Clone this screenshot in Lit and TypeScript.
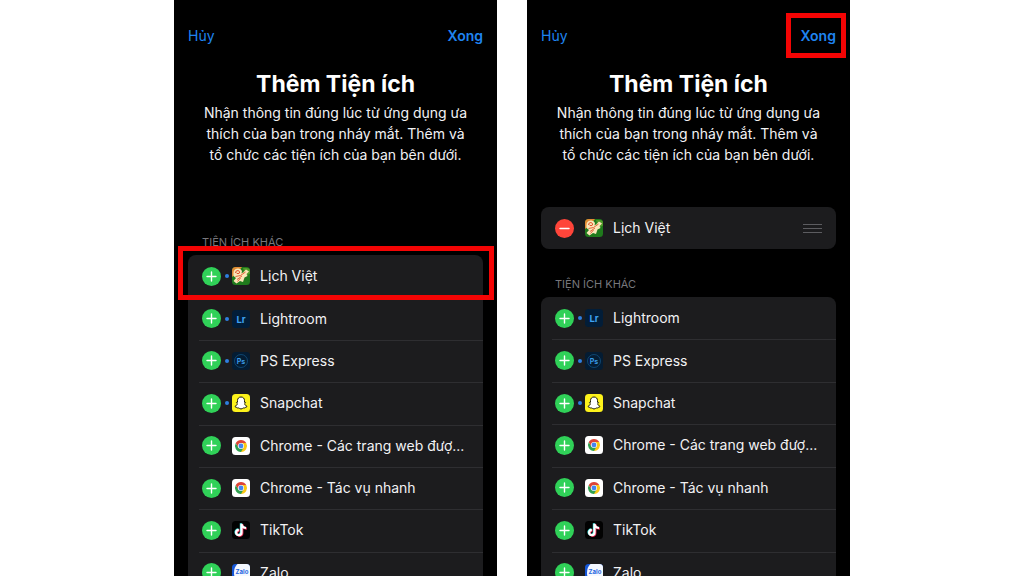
import { LitElement, html, css, svg, nothing } from "lit";
import { customElement, property } from "lit/decorators.js";
import { classMap } from "lit/directives/class-map.js";

interface Widget {
  name: string;
  icon: string;
  fresh?: boolean;
  marked?: boolean;
}

const CALENDAR: Widget = { name: "Lịch Việt", icon: "calendar", fresh: true };

const OTHERS: Widget[] = [
  { name: "Lightroom", icon: "lightroom", fresh: true },
  { name: "PS Express", icon: "photoshop", fresh: true },
  { name: "Snapchat", icon: "snapchat", fresh: true },
  { name: "Chrome - Các trang web đượ...", icon: "chrome" },
  { name: "Chrome - Tác vụ nhanh", icon: "chrome" },
  { name: "TikTok", icon: "tiktok" },
  { name: "Zalo", icon: "zalo" },
];

const ICONS: Record<string, unknown> = {
  calendar: svg`
    <rect width="36" height="36" rx="7" fill="#1f7a1c"/>
    <path d="M0 20V7Q0 0 7 0H20L10 12Z" fill="#e08a34"/>
    <path d="M22 2H29Q36 2 36 8V13L27 18Z" fill="#4f9a28"/>
    <path d="M3 12Q3 4 11 3Q18 2 20 8L19 13L28 5L34 9L29 14L31 18L25 21L22 30L16 28L9 33L3 28L8 22L3 18Z" fill="#fae6b8"/>
    <path d="M7 12Q7 7 12 7Q16 8 15 12Q12 15 9 12" fill="none" stroke="#e0502c" stroke-width="2"/>
    <path d="M7 19L17 17L27 10M10 25L20 18M11 29L17 22" fill="none" stroke="#e0562e" stroke-width="1.8"/>
    <path d="M21 12L25 7" stroke="#3c8a22" stroke-width="1.6"/>`,
  lightroom: svg`
    <rect width="36" height="36" rx="7" fill="#021d38"/>
    <text x="18" y="25" class="glyph" font-size="19" fill="#3fa2f2">Lr</text>`,
  photoshop: svg`
    <rect width="36" height="36" rx="7" fill="#041c33"/>
    <circle cx="18" cy="18" r="13" fill="none" stroke="#12507f" stroke-width="1.6"/>
    <text x="18" y="23" class="glyph" font-size="14" fill="#3a9be6">Ps</text>`,
  snapchat: svg`
    <rect width="36" height="36" rx="7" fill="#fdf21b"/>
    <path d="M18 6C22.5 6 25 9.2 25 13V16.6C26.6 16.2 27.8 17 26.8 18.2L25.2 19.4C26 22.4 28 23.8 30 24.4C30.4 25.8 28.4 26.2 26.8 26.6C26.4 28.4 25 27.8 23.4 27.8C21.6 27.8 20.6 30 18 30C15.4 30 14.4 27.8 12.6 27.8C11 27.8 9.6 28.4 9.2 26.6C7.6 26.2 5.6 25.8 6 24.4C8 23.8 10 22.4 10.8 19.4L9.2 18.2C8.2 17 9.4 16.2 11 16.6V13C11 9.2 13.5 6 18 6Z" fill="#fff" stroke="#1c1c0a" stroke-width="2" stroke-linejoin="round"/>`,
  chrome: svg`
    <rect width="36" height="36" rx="7" fill="#fff"/>
    <path d="M18 18L7.6 12A12 12 0 0 1 28.4 12Z" fill="#dd4436"/>
    <path d="M18 18L28.4 12A12 12 0 0 1 18 30Z" fill="#fbc814"/>
    <path d="M18 12H28.4L18 30L23.2 21Z" fill="#fbc814"/>
    <path d="M18 30L23.2 21L12.8 21L7.6 12A12 12 0 0 0 18 30Z" fill="#2fa04f"/>
    <path d="M7.6 12L12.8 21L18 12Z" fill="#dd4436"/>
    <circle cx="18" cy="18" r="6" fill="#fff"/>
    <circle cx="18" cy="18" r="4.8" fill="#4385f0"/>`,
  tiktok: svg`
    <rect width="36" height="36" rx="7" fill="#020202"/>
    <g fill="none" stroke-width="4.4">
      <path d="M19 5.5V23A5.4 5.4 0 1 1 13.6 17.6M19 5.5Q19.6 13 28 14" transform="translate(-1.2 -0.8)" stroke="#35e6e0"/>
      <path d="M19 5.5V23A5.4 5.4 0 1 1 13.6 17.6M19 5.5Q19.6 13 28 14" transform="translate(1.6 1.2)" stroke="#f0305a"/>
      <path d="M19 5.5V23A5.4 5.4 0 1 1 13.6 17.6M19 5.5Q19.6 13 28 14" stroke="#fff"/>
    </g>`,
  zalo: svg`
    <rect width="36" height="36" rx="7" fill="#1557d8"/>
    <path d="M11 0H29Q36 0 36 7V29Q36 36 29 36H14Q4 30 4 18Q4 6 11 0Z" fill="#f4f8ff"/>
    <text x="20" y="20" class="glyph" font-size="12" fill="#1f66e0">Zalo</text>`,
};

@customElement("widget-row")
class WidgetRow extends LitElement {
  @property({ attribute: false }) widget!: Widget;
  @property({ type: Boolean }) added = false;

  static styles = css`
    :host {
      display: flex;
      align-items: center;
      height: 100%;
      padding: 0 14px;
      box-sizing: border-box;
    }
    .toggle {
      flex: none;
      width: 19px;
      height: 19px;
      padding: 0;
      border: 0;
      border-radius: 50%;
      background: #30d158;
      cursor: pointer;
    }
    .toggle.remove {
      background: #ff453a;
    }
    .sign,
    .icon,
    .grip {
      display: block;
    }
    .slot {
      flex: none;
      display: grid;
      place-items: center;
      width: 11px;
    }
    .dot {
      width: 4px;
      height: 4px;
      border-radius: 50%;
      background: #2f7fe0;
    }
    .icon {
      flex: none;
      width: 18px;
      height: 18px;
    }
    .glyph {
      font-family: Inter, sans-serif;
      font-weight: 700;
      text-anchor: middle;
    }
    .name {
      flex: 1;
      min-width: 0;
      margin-left: 10px;
      overflow: hidden;
      white-space: nowrap;
      text-overflow: ellipsis;
      line-height: 24px;
    }
    .handle {
      flex: none;
      padding: 0;
      border: 0;
      background: none;
      cursor: grab;
    }
  `;

  render() {
    const { name, icon, fresh } = this.widget;
    return html`
      <button
        class=${classMap({ toggle: true, remove: this.added })}
        aria-label=${(this.added ? "Xóa " : "Thêm ") + name}
      >
        <svg class="sign" width="19" height="19" viewBox="0 0 19 19" aria-hidden="true">
          <path d=${this.added ? "M5 9.5H14" : "M5 9.5H14M9.5 5V14"} stroke="#fff" stroke-width="1.4" stroke-linecap="round" />
        </svg>
      </button>
      <span class="slot">${fresh && !this.added ? html`<span class="dot"></span>` : nothing}</span>
      <svg class="icon" viewBox="0 0 36 36" aria-hidden="true">${ICONS[icon]}</svg>
      <span class="name">${name}</span>
      ${this.added
        ? html`<button class="handle" aria-label="Sắp xếp ${name}">
            <svg class="grip" width="19" height="12" viewBox="0 0 19 12" aria-hidden="true">
              <path d="M0 2.5H19M0 6.5H19M0 10.5H19" stroke="#5c5c60" />
            </svg>
          </button>`
        : nothing}
    `;
  }
}

@customElement("widget-sheet")
class WidgetSheet extends LitElement {
  @property({ attribute: false }) added: Widget[] = [];
  @property({ attribute: false }) others: Widget[] = [];
  @property({ type: Boolean, attribute: "mark-done" }) markDone = false;

  static styles = css`
    :host {
      display: flex;
      flex-direction: column;
      min-width: 0;
      padding: 0 14px;
      overflow: hidden;
      box-sizing: border-box;
      background: #000;
      color: #f2f2f4;
      font: 14px/20px Inter, "Noto Sans", sans-serif;
    }
    .bar {
      display: flex;
      align-items: center;
      justify-content: space-between;
      height: 72px;
    }
    .action {
      position: relative;
      padding: 0;
      border: 0;
      background: none;
      color: #1f84f0;
      font: inherit;
      cursor: pointer;
    }
    .done {
      font-weight: 600;
    }
    .intro {
      padding-bottom: 42px;
      text-align: center;
    }
    .title {
      margin: 0;
      color: #fff;
      font-size: 23px;
      font-weight: 700;
      line-height: 24px;
    }
    .lead {
      margin: 6px 0 0;
      line-height: 21px;
    }
    .line {
      display: block;
      white-space: nowrap;
    }
    .list {
      display: grid;
      grid-template-columns: minmax(0, 1fr);
      margin: 0;
      padding: 0;
      list-style: none;
      border-radius: 8px;
      background: #1c1c1e;
    }
    .chosen {
      grid-auto-rows: 42px;
    }
    .rest {
      flex: 1;
      grid-auto-rows: minmax(42px, 1fr);
      margin-bottom: -18px;
    }
    .label {
      margin: 28px 14px 6px;
      color: #77777c;
      font-size: 11px;
      font-weight: 400;
      line-height: 14px;
    }
    .item {
      position: relative;
    }
    .item + .item::before {
      content: "";
      position: absolute;
      inset: 0 0 auto 11px;
      height: 1px;
      background: #2e2e31;
    }
    .ring {
      position: absolute;
      z-index: 1;
      border: 5px solid #f40404;
      pointer-events: none;
    }
    .around-row {
      inset: -9px -11px -3px -10px;
    }
    .around-action {
      inset: -13px -10px -12px -14px;
    }
  `;

  render() {
    return html`
      <header class="bar">
        <button class="action">Hủy</button>
        <button class="action done">
          Xong${this.markDone ? html`<span class="ring around-action"></span>` : nothing}
        </button>
      </header>
      <div class="intro">
        <h1 class="title">Thêm Tiện ích</h1>
        <p class="lead">
          <span class="line">Nhận thông tin đúng lúc từ ứng dụng ưa</span>
          <span class="line">thích của bạn trong nháy mắt. Thêm và</span>
          <span class="line">tổ chức các tiện ích của bạn bên dưới.</span>
        </p>
      </div>
      ${this.added.length
        ? html`<ul class="list chosen">
            ${this.added.map((w) => html`<li class="item"><widget-row .widget=${w} added></widget-row></li>`)}
          </ul>`
        : nothing}
      <h2 class="label">TIỆN ÍCH KHÁC</h2>
      <ul class="list rest">
        ${this.others.map(
          (w) => html`<li class="item">
            <widget-row .widget=${w}></widget-row>
            ${w.marked ? html`<span class="ring around-row"></span>` : nothing}
          </li>`
        )}
      </ul>
    `;
  }
}

@customElement("app-root")
class AppRoot extends LitElement {
  static styles = css`
    :host {
      display: grid;
      grid-template-columns: 1fr 1fr;
      gap: 30px;
      height: 100vh;
      padding: 0 17%;
      box-sizing: border-box;
      overflow: hidden;
      background: #fff;
    }
  `;

  render() {
    return html`
      <widget-sheet .others=${[{ ...CALENDAR, marked: true }, ...OTHERS]}></widget-sheet>
      <widget-sheet .added=${[CALENDAR]} .others=${OTHERS} mark-done></widget-sheet>
    `;
  }
}
